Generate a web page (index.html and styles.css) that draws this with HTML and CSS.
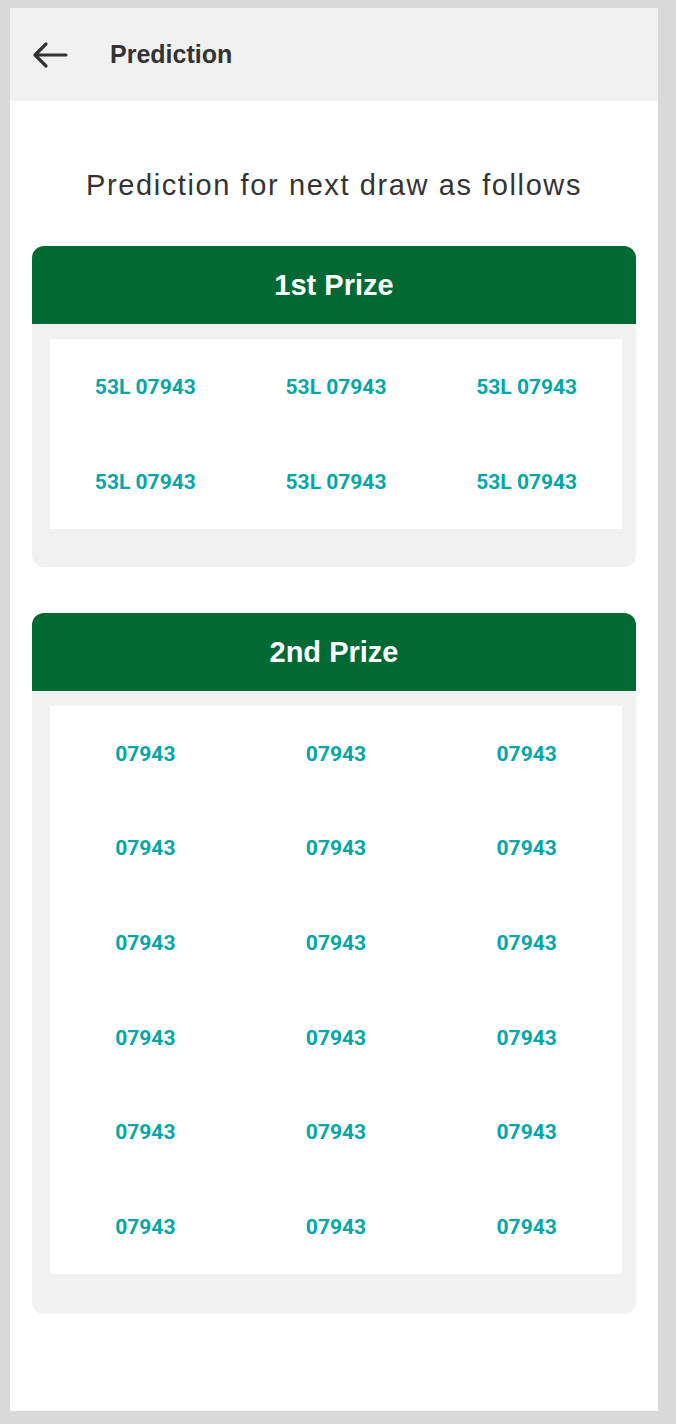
FILE: index.html
```html
<!DOCTYPE html>
<html lang="en">
<head>
<meta charset="utf-8">
<title>Prediction</title>
<link rel="stylesheet" href="styles.css">
</head>
<body>
<div class="frame">
  <header class="topbar">
    <svg class="back" width="36" height="28" viewBox="0 0 36 28" aria-hidden="true">
      <path d="M34 14H3M14 3L3 14L14 25" fill="none" stroke="#333" stroke-width="3.2" stroke-linecap="round" stroke-linejoin="round"/>
    </svg>
    <h1 class="title">Prediction</h1>
  </header>
  <main class="content">
    <p class="subtitle">Prediction for next draw as follows</p>

    <section class="card">
      <div class="card-head">1st Prize</div>
      <div class="card-body">
        <div class="grid rows-2">
          <span>53L 07943</span><span>53L 07943</span><span>53L 07943</span>
          <span>53L 07943</span><span>53L 07943</span><span>53L 07943</span>
        </div>
      </div>
    </section>

    <section class="card">
      <div class="card-head">2nd Prize</div>
      <div class="card-body card-body-tall">
        <div class="grid rows-6">
          <span>07943</span><span>07943</span><span>07943</span>
          <span>07943</span><span>07943</span><span>07943</span>
          <span>07943</span><span>07943</span><span>07943</span>
          <span>07943</span><span>07943</span><span>07943</span>
          <span>07943</span><span>07943</span><span>07943</span>
          <span>07943</span><span>07943</span><span>07943</span>
        </div>
      </div>
    </section>
  </main>
</div>
</body>
</html>
```

FILE: styles.css
```css
* { box-sizing: border-box; }

html, body {
  margin: 0;
  padding: 0;
}

body {
  background: #d9d9d9;
  font-family: "Liberation Sans", Arial, sans-serif;
  color: #333333;
  padding: 8px 18px 13px 10px;
}

.frame {
  background: #ffffff;
  height: 1403px;
}

.topbar {
  height: 93px;
  background: #f1f1f1;
  display: flex;
  align-items: center;
  padding-left: 22px;
  gap: 42px;
}

.back {
  display: block;
  flex: none;
}

.title {
  margin: 0;
  font-size: 25px;
  font-weight: 700;
  color: #333333;
  line-height: 28px;
  padding-bottom: 2px;
}

.content {
  padding: 64px 22px 0 22px;
}

.subtitle {
  margin: 0 0 41px 0;
  text-align: center;
  font-size: 29px;
  line-height: 40px;
  letter-spacing: 1.6px;
  color: #333333;
}

.card {
  background: #f1f1f1;
  border-radius: 12px;
  overflow: hidden;
  margin-bottom: 46px;
}

.card-head {
  height: 78px;
  background: #016a34;
  color: #ffffff;
  font-size: 29px;
  font-weight: 700;
  display: flex;
  align-items: center;
  justify-content: center;
}

.card-body {
  padding: 15px 14px 38px 18px;
}

.card-body-tall {
  padding-bottom: 40px;
}

.grid {
  background: #ffffff;
  display: grid;
  grid-template-columns: repeat(3, 1fr);
}

.rows-2 { grid-template-rows: repeat(2, 95px); }
.rows-6 { grid-template-rows: repeat(6, 94.67px); }

.grid span {
  display: flex;
  align-items: center;
  justify-content: center;
  padding-top: 1px;
  font-family: Roboto, "Liberation Sans", sans-serif;
  font-weight: 700;
  font-size: 21px;
  color: #05a7a6;
}
```
